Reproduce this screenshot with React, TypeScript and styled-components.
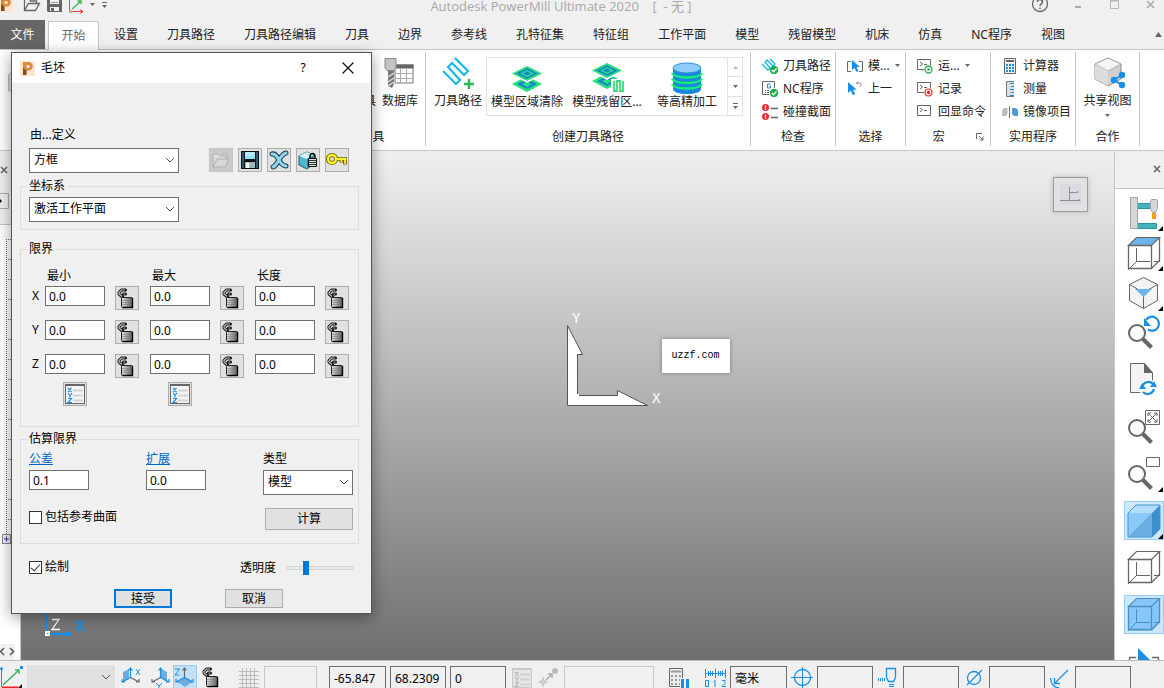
import React from "react";
import styled, { createGlobalStyle, css } from "styled-components";

const Global = createGlobalStyle`
  *, *::before, *::after { box-sizing: border-box; }
  html, body { margin: 0; height: 100%; }
  body, button, input, select {
    font-family: "Noto Sans", "Noto Sans CJK SC", sans-serif;
    font-size: 12px;
    line-height: 16px;
    color: #000;
  }
  button { padding: 0; margin: 0; border: 0; background: none; }
  svg { display: block; flex: none; }
`;

/* ---------- window frame ---------- */

const Window = styled.div`
  position: relative;
  display: flex;
  flex-direction: column;
  height: 100vh;
  overflow: hidden;
  background: #f0f0f0;
`;

const TitleBar = styled.header`
  flex: none;
  display: flex;
  height: 20px;
`;

const QuickAccess = styled.div`
  display: flex;
  gap: 6px;
  width: 110px;
`;

const Title = styled.h1`
  flex: 1;
  margin: 0;
  padding-right: 16px;
  font-family: "Open Sans", "Noto Sans CJK SC", sans-serif;
  font-size: 13px;
  font-weight: 400;
  line-height: 13px;
  text-align: center;
  white-space: pre;
  color: #a9a9a9;
`;

const WindowButtons = styled.div`
  display: flex;
  width: 136px;
`;

const FrameButton = styled.button<{ $w: number }>`
  width: ${(p) => p.$w}px;
  height: 16px;
`;

const Tabs = styled.nav`
  flex: none;
  display: flex;
  align-items: stretch;
  height: 30px;
  border-bottom: 1px solid #c6c6c6;
`;

const Tab = styled.button<{ $kind?: "file" | "active" }>`
  flex: none;
  padding: 0 14px;
  margin-right: 1px;
  white-space: nowrap;
  color: #222;
  ${(p) =>
    p.$kind === "file" &&
    css`
      width: 45px;
      padding: 0;
      margin-right: 3px;
      background: #666;
      color: #fff;
    `}
  ${(p) =>
    p.$kind === "active" &&
    css`
      width: 51px;
      padding: 0;
      margin: 1px 1px -1px 0;
      background: #fff;
      border: 1px solid #c6c6c6;
      border-bottom: 0;
      color: #666;
    `}
`;

const Collapse = styled.button`
  margin-left: auto;
  width: 10px;
`;

/* ---------- ribbon ---------- */

const Ribbon = styled.section`
  flex: none;
  display: flex;
  padding: 2px 0 4px;
  background: #fff;
  border-bottom: 1px solid #c6c6c6;
  color: #222;
`;

const Group = styled.div<{ $w: number }>`
  flex: none;
  display: flex;
  flex-direction: column;
  width: ${(p) => p.$w}px;
  border-right: 1px solid #c6c6c6;
`;

const GroupBody = styled.div<{ $align?: string }>`
  display: flex;
  justify-content: ${(p) => p.$align ?? "center"};
  height: 76px;
`;

const GroupLabel = styled.div`
  display: flex;
  justify-content: center;
  align-items: center;
  position: relative;
  padding: 1px 0;
`;

const Launcher = styled.button`
  position: absolute;
  right: 6px;
  top: 4px;
`;

const BigButton = styled.button<{ $w: number }>`
  display: flex;
  flex-direction: column;
  align-items: center;
  width: ${(p) => p.$w}px;
  padding-top: 5px;
  white-space: nowrap;
  color: #222;
`;

const SmallList = styled.div`
  flex: 1;
  padding: 2px 0 0 11px;
`;

const SmallButton = styled.button`
  display: flex;
  align-items: center;
  gap: 5px;
  height: 23px;
  white-space: nowrap;
  color: #222;
`;

const Gallery = styled.div`
  display: flex;
  height: 59px;
  margin: 5px 0 0 3px;
  border: 1px solid #e2e2e2;
  ${BigButton} { padding-top: 0; }
`;

const GalleryScroll = styled.div`
  display: flex;
  flex-direction: column;
  width: 15px;
  border-left: 1px solid #e2e2e2;
`;

const ScrollStep = styled.button`
  flex: 1;
  display: flex;
  align-items: center;
  justify-content: center;
  & + & { border-top: 1px solid #e2e2e2; }
`;

/* ---------- work area ---------- */

const Work = styled.main`
  flex: 1;
  display: flex;
  min-height: 0;
`;

const Explorer = styled.aside`
  flex: none;
  display: flex;
  flex-direction: column;
  width: 21px;
  overflow: hidden;
  background: #fff;
  border-right: 1px solid #c6c6c6;
`;

const ExplorerHead = styled.div`
  display: flex;
  flex-direction: column;
  gap: 17px;
  height: 74px;
  padding-top: 13px;
  background: #f0f0f0;
  border-bottom: 1px solid #c6c6c6;
`;

const ExplorerTree = styled.div`
  flex: 1;
  padding-top: 14px;
  min-height: 0;
  overflow: hidden;
`;

const ExplorerPager = styled.div`
  width: 15px;
  height: 16px;
  background: #f0f0f0;
`;

const Viewport = styled.section`
  position: relative;
  flex: 1;
  min-width: 0;
  overflow: hidden;
  background: linear-gradient(#f0f0f0, #6f6f6f);
`;

const Triad = styled.svg`
  position: absolute;
  left: 50%;
  top: 50%;
  margin: -96px 0 0 -2px;
`;

const MiniTriad = styled.svg`
  position: absolute;
  left: 20px;
  bottom: 18px;
`;

const Watermark = styled.div`
  position: absolute;
  left: 50%;
  top: 50%;
  margin: -67px 0 0 94px;
  padding: 9px 10px;
  background: #fff;
  box-shadow: 0 0 4px rgba(0, 0, 0, 0.35);
  font-family: "Liberation Mono", monospace;
  font-size: 10px;
`;

const ViewFace = styled.button`
  position: absolute;
  top: 26px;
  right: 26px;
  width: 35px;
  height: 35px;
  padding: 6px;
  border: 1px solid #9c9c9c;
  box-shadow: 0 0 5px rgba(0, 0, 0, 0.2);
  background: #e2e2e2;
`;

const ViewTools = styled.aside`
  flex: none;
  display: flex;
  flex-direction: column;
  width: 50px;
  overflow: hidden;
  background: #fff;
  border-left: 1px solid #c6c6c6;
`;

const ViewToolsHead = styled.div`
  flex: none;
  display: flex;
  justify-content: flex-end;
  height: 38px;
  padding: 13px 2px 0 0;
  background: #f0f0f0;
  border-bottom: 1px solid #c6c6c6;
`;

const ToolStack = styled.div<{ $gap: number; $top: number }>`
  display: flex;
  flex-direction: column;
  align-items: flex-end;
  gap: ${(p) => p.$gap}px;
  padding-top: ${(p) => p.$top}px;
`;

const Tool = styled.button<{ $on?: boolean }>`
  flex: none;
  width: 40px;
  height: 39px;
  border: 1px solid ${(p) => (p.$on ? "#99ccf5" : "transparent")};
  background: ${(p) => (p.$on ? "#cce6fb" : "transparent")};
  svg { margin: -1px; }
`;

/* ---------- status bar ---------- */

const StatusBar = styled.footer`
  flex: none;
  display: flex;
  gap: 12px;
  height: 28px;
  padding-top: 4px;
  overflow: hidden;
  border-top: 1px solid #bdbdbd;
  background: #f0f0f0;
`;

const StatusGroup = styled.div`
  display: flex;
  gap: 4px;
`;

const StatusIcon = styled.button<{ $w: number; $on?: boolean }>`
  flex: none;
  width: ${(p) => p.$w}px;
  height: 24px;
  border: 1px solid ${(p) => (p.$on ? "#99ccf5" : "transparent")};
  background: ${(p) => (p.$on ? "#c5e0f6" : "transparent")};
  svg { margin: -1px; }
`;

const StatusField = styled.input<{ $w: number }>`
  flex: none;
  width: ${(p) => p.$w}px;
  height: 24px;
  margin-top: 1px;
  padding: 0 4px;
  border: 1px solid #6f6f6f;
  border-radius: 0;
  background: #f0f0f0;
  outline: 0;
  &:disabled { border-color: #c8c8c8; }
`;

/* ---------- dialog ---------- */

const Dialog = styled.form`
  position: absolute;
  left: 11px;
  top: 52px;
  width: 361px;
  background: #f0f0f0;
  border: 1px solid #555;
  box-shadow: 0 3px 14px rgba(0, 0, 0, 0.4);
`;

const DialogTitle = styled.div`
  display: flex;
  align-items: center;
  height: 30px;
  padding-left: 8px;
  background: #fff;
`;

const DialogName = styled.h2`
  flex: 1;
  margin: 0 0 0 6px;
  font-size: 12px;
  font-weight: 400;
`;

const DialogBody = styled.div`
  padding: 44px 12px 5px 8px;
`;

const Indent = styled.div`
  padding-left: 10px;
`;

const FieldLabel = styled.label`
  display: block;
`;

const ToolLine = styled.div`
  display: flex;
  justify-content: space-between;
  padding: 5px 10px 5px 9px;
`;

const IconRow = styled.div`
  display: flex;
  gap: 5px;
`;

const IconButton = styled.button`
  flex: none;
  display: flex;
  align-items: center;
  justify-content: center;
  width: 24px;
  height: 24px;
  border: 1px solid #adadad;
  background: #e1e1e1;
  &:disabled { border-color: #c4c4c4; background: #cacaca; }
`;

const SelectBox = styled.span<{ $w: number; $flat?: boolean }>`
  display: block;
  position: relative;
  flex: none;
  width: ${(p) => p.$w}px;
  svg { position: absolute; right: 4px; top: 9px; pointer-events: none; }
  select {
    display: block;
    width: 100%;
    height: 25px;
    padding: 0 4px 1px;
    appearance: none;
    border: 1px solid ${(p) => (p.$flat ? "transparent" : "#6f6f6f")};
    border-radius: 0;
    background: ${(p) => (p.$flat ? "#e0e0e0" : "#fff")};
    outline: 0;
  }
`;

const Fieldset = styled.fieldset<{ $top: number; $pad: string }>`
  margin: ${(p) => p.$top}px 0 0;
  padding: ${(p) => p.$pad};
  min-width: 0;
  border: 1px solid #dcdcdc;
`;

const Legend = styled.legend`
  height: 16px;
  padding: 0 2px;
  margin-left: -2px;
`;

const LimitGrid = styled.div`
  display: grid;
  grid-template-columns: 13px 105px 105px 95px;
  row-gap: 10px;
  padding: 2px 0 0 3px;
`;

const LimitHeads = styled.div`
  display: grid;
  grid-template-columns: 105px 105px 95px;
  padding-left: 18px;
`;

const LimitCell = styled.div`
  display: flex;
  gap: 10px;
  align-items: flex-start;
`;

const AxisName = styled.span`
  line-height: 20px;
`;

const PickRow = styled.div`
  display: flex;
  gap: 81px;
  padding: 4px 0 0 34px;
`;

const TextInput = styled.input`
  display: block;
  width: 60px;
  height: 20px;
  padding: 0 3px;
  border: 1px solid #6f6f6f;
  border-radius: 0;
  background: #fff;
  outline: 0;
`;

const EstimateRow = styled.div`
  display: grid;
  grid-template-columns: 117px 117px 90px;
`;

const Stack = styled.div`
  display: flex;
  flex-direction: column;
  align-items: flex-start;
  gap: 3px;
`;

const HelpLink = styled.a`
  color: #0066cc;
  text-decoration: underline;
`;

const Between = styled.div<{ $pad: string }>`
  display: flex;
  justify-content: space-between;
  align-items: flex-start;
  padding: ${(p) => p.$pad};
`;

const CheckLabel = styled.label`
  display: flex;
  align-items: center;
  gap: 3px;
  height: 18px;
`;

const CheckBox = styled.input`
  appearance: none;
  display: flex;
  justify-content: center;
  width: 13px;
  height: 13px;
  margin: 0;
  border: 1px solid #333;
  background: #fff;
  &:checked::after {
    content: "";
    width: 5px;
    height: 9px;
    border: solid #333;
    border-width: 0 1px 1px 0;
    transform: rotate(42deg);
  }
`;

const PushButton = styled.button<{ $w: number; $h: number; $primary?: boolean }>`
  width: ${(p) => p.$w}px;
  height: ${(p) => p.$h}px;
  border: ${(p) => (p.$primary ? "2px solid #0078d7" : "1px solid #adadad")};
  background: #e1e1e1;
`;

const SliderLabel = styled.label`
  display: flex;
  align-items: center;
  gap: 11px;
  height: 20px;
`;

const Slider = styled.input`
  appearance: none;
  width: 66px;
  height: 14px;
  margin: 0;
  background: transparent;
  &::-webkit-slider-runnable-track {
    height: 4px;
    background: #e7eaea;
    border: 1px solid #d6d6d6;
  }
  &::-webkit-slider-thumb {
    appearance: none;
    width: 6px;
    height: 14px;
    margin-top: -6px;
    background: #0078d7;
  }
`;

const Actions = styled.div`
  display: flex;
  gap: 53px;
  padding: 11px 0 0 94px;
`;

/* ---------- icons ---------- */

const BLUE = "#1a8fe8";
const GREY = "#666";

type SvgProps = React.SVGProps<SVGSVGElement> & { w: number; h: number };
const Svg = ({ w, h, children, ...rest }: SvgProps) => (
  <svg width={w} height={h} viewBox={`0 0 ${w} ${h}`} fill="none" aria-hidden="true" {...rest}>
    {children}
  </svg>
);

const PShape = () => (
  <>
    <path d="M3 14V1h5.500a4.300 4.300 0 0 1 0 8.600H6.500V14z" fill="#d9893a" />
    <path d="M3 14V7l3.500 2.600V14z" fill="#8f4d16" />
    <path d="M6.500 4h2a1.500 1.500 0 0 1 0 3h-2z" fill="#fbe6d2" />
  </>
);

const Caret = ({ up, color = GREY }: { up?: boolean; color?: string }) => (
  <Svg w={5} h={3}><path d={up ? "M0 3h5L2.500 0z" : "M0 0h5L2.500 3z"} fill={color} /></Svg>
);

const MoreCaret = () => (
  <Svg w={5} h={6}><path d="M0 0h5v1H0zM0 3h5L2.500 6z" fill={GREY} /></Svg>
);

const Chevron = () => (
  <Svg w={10} h={7}><path d="M1 1l4 4 4-4" stroke="#555" /></Svg>
);

const CloseX = () => (
  <Svg w={10} h={10}><path d="M2 2l6 6M8 2L2 8" stroke="#666" strokeWidth="1.600" /></Svg>
);

const OpenLock = () => (
  <Svg w={22} h={22}>
    <defs>
      <linearGradient id="metal"><stop stopColor="#e4e4e4" /><stop offset="1" stopColor="#5a5a5a" /></linearGradient>
    </defs>
    <path d="M9.500 3H5.500L3 5.500V7L7 10.500M9.500 7H7.500" stroke="#111" strokeWidth="3" strokeLinejoin="round" strokeLinecap="round" />
    <path d="M9 3H5.500L3 5.500V7L6 9.500M9.300 7H7.500" stroke="#c4c4c4" strokeWidth="1.200" />
    <rect x="5.500" y="10.500" width="11" height="10" rx="1" fill="url(#metal)" stroke="#222" />
    <path d="M6 13.500h10M6 15.500h10M6 17.500h10" stroke="#777" strokeWidth=".5" />
    <path d="M16.500 11v9.500H6.500" stroke="#000" strokeWidth="1.400" />
  </Svg>
);

const XyzList = ({ off }: { off?: boolean }) => (
  <Svg w={22} h={22}>
    <rect x="1.500" y="1.500" width="19" height="19" fill={off ? "#e6e6e6" : "#f4f4f4"} stroke={off ? "#c8c8c8" : GREY} />
    <path d="M1 2h20" stroke={off ? "#c8c8c8" : GREY} strokeWidth="2" />
    <path d="M9 7.500h10M9 12.500h10M9 17.500h10" stroke={off ? "#d2d2d2" : "#d4d4d4"} strokeWidth="2" />
    <path d="M4 5l3.500 4M7.500 5L4 9M4 10l2 2.500 2-2.500M6 12v2.500M4 15.500h3.500L4 19.500h4" stroke={off ? "#bbb" : BLUE} strokeWidth="1.200" />
  </Svg>
);

const Hatch = () => (
  <Svg w={36} h={36}>
    <path d="M3 14l13 13 4-4L8 10l4-4 12 12 4-4L15 1" stroke="#18b8e8" strokeWidth="2.200" />
    <path d="M24 27h10M29 22v10" stroke="#2fb457" strokeWidth="2.500" />
  </Svg>
);

const Layers = ({ badge }: { badge?: boolean }) => (
  <Svg w={36} h={36}>
    <g transform={badge ? "translate(0 -1)" : "translate(0 2)"}>
      <path d="M3 24l15-8 15 8-15 8z" fill="#25e07b" />
      <path d="M8 24l10-5 10 5-10 5z" fill="#1787cc" />
      <path d="M13 24l5-2 5 2-5 3z" fill="#25e07b" />
      <path d="M1 13.500L18 5l17 8.500L18 23z" fill="#fff" />
      <path d="M3 13.500L18 6l15 7.500L18 21z" fill="#25e07b" />
      <path d="M7 13.500L18 8l11 5.500L18 19z" fill="#1787cc" />
      <path d="M11 13.500l7-3.500 7 3.500-7 3.500z" fill="#25e07b" />
      <path d="M14 13.500l4-2 4 2-4 2z" fill="#1787cc" />
    </g>
    {badge && (
      <>
        <path d="M22 21h14v14H22z" fill="#fff" />
        <path d="M25 23v10h3V23h3v10h3V23" stroke="#35dd7a" strokeWidth="1.800" />
      </>
    )}
  </Svg>
);

const Cylinder = () => (
  <Svg w={36} h={36}>
    <path d="M4 10v21c0 3 6 5 14 5s14-2 14-5V10z" fill="#1a86dc" />
    <path d="M3 15c3 6 27 6 30 0M3 20.500c3 6 27 6 30 0M3 26c3 6 27 6 30 0" stroke="#12ee78" strokeWidth="2.400" />
    <ellipse cx="18" cy="10" rx="14" ry="5" fill="#90ccfa" stroke="#2a8fe0" />
  </Svg>
);

const ToolDatabase = () => (
  <Svg w={36} h={36}>
    <path d="M13 8h18v18H13z" fill="#fff" stroke="#777" />
    <path d="M13 7.500h18.500v4H13z" fill="#666" />
    <path d="M18.500 12v14M24.500 12v14M13 16.500h18M13 21.500h18" stroke="#aaa" />
    <path d="M3 1.500h11v9l-2 3H5l-2-3z" fill="#c4c4c4" stroke="#888" />
    <path d="M6 14h6v13l-2 4-4-2z" fill="#777" />
    <path d="M6 20l6-4M6 25l6-4M6 29l6-4" stroke="#ddd" strokeWidth="1.500" />
  </Svg>
);

const ShareView = () => (
  <Svg w={36} h={36}>
    <path d="M5 7l13-6 13 6v15l-13 7-13-7z" fill="#d0d0d0" stroke="#888" />
    <path d="M5 7l13-6 13 6-13 7z" fill="#f4f4f4" stroke="#999" strokeWidth=".7" />
    <path d="M5 7.500l13 6.500v15L5 22z" fill="#dcdcdc" />
    <path d="M24 23l8-5M24 23l8 5" stroke={BLUE} strokeWidth="2" />
    <circle cx="24" cy="23" r="3.200" fill={BLUE} /><circle cx="32" cy="18" r="3.200" fill={BLUE} /><circle cx="32" cy="28" r="3.200" fill={BLUE} />
  </Svg>
);

const OkBadge = () => (
  <>
    <circle cx="12" cy="12" r="4.300" fill="#25ac50" />
    <path d="M9.800 12l1.700 1.700 3-3.200" stroke="#fff" strokeWidth="1.300" />
  </>
);

const PathCheck = () => (
  <Svg w={16} h={16}>
    <path d="M0 6l6 6 2-2-5-6 2-2 6 6 2-2-5-5" stroke="#18b8e8" strokeWidth="1.300" />
    <OkBadge />
  </Svg>
);
const NcCheck = () => (
  <Svg w={16} h={16}>
    <path d="M12.500 7V.500H.500v13H7" fill="#fff" stroke={GREY} />
    <path d="M8.500 3H5.500v4h3V5H7" stroke={BLUE} />
    <path d="M3 9.500h1M5 9.500h2M3 11.500h1M5 11.500h2" stroke={GREY} />
    <OkBadge />
  </Svg>
);
const Alerts = () => (
  <Svg w={16} h={16}>
    <circle cx="3.500" cy="3.500" r="3.500" fill="#ee2b2b" /><circle cx="3.500" cy="12.500" r="3.500" fill="#ee2b2b" />
    <path d="M3.500 1.500v3M3.500 5v1M3.500 10.500v3M3.500 14v1" stroke="#fff" strokeWidth="1.200" />
    <path d="M9 4.500h7M9 13.500h7" stroke={GREY} strokeWidth="1.500" />
  </Svg>
);

const pointer = "M0 0v10l2.500-2 2 4 2-1-2-4H8z";

const SelectModel = () => (
  <Svg w={16} h={16}>
    <path d="M4 3.500H.500v10H4M12 3.500h3.500v10H12" stroke={GREY} />
    <path d={pointer} fill={BLUE} transform="translate(5 2)" />
  </Svg>
);
const SelectPrev = () => (
  <Svg w={16} h={16}>
    <path d={pointer} fill={BLUE} transform="translate(1 1) scale(1.1)" />
    <path d="M9.500 2h3c2.500 0 2 3 0 3.500M11 .500L9.500 2 11 3.500" stroke="#888" />
  </Svg>
);
const Terminal = ({ badge }: { badge?: "run" | "rec" }) => (
  <Svg w={16} h={16}>
    <path d="M.500 1.500h13v10H.500z" fill="#fff" stroke={GREY} />
    <path d="M3 4l2.500 2L3 8M7 6.500h3" stroke={GREY} />
    {badge && <circle cx="11.500" cy="11.500" r="4.500" fill="#fff" />}
    {badge === "run" && <><circle cx="11.500" cy="11.500" r="3.500" stroke="#25ac50" strokeWidth="1.300" /><path d="M10.500 9.500v4l3-2z" fill="#25ac50" /></>}
    {badge === "rec" && <><circle cx="11.500" cy="11.500" r="3.500" stroke="#ee2b2b" strokeWidth="1.200" /><circle cx="11.500" cy="11.500" r="1.800" fill="#ee2b2b" /></>}
  </Svg>
);
const Calculator = () => (
  <Svg w={16} h={16}>
    <path d="M2.500.500h11v15h-11z" fill="#eee" stroke={GREY} />
    <path d="M4 3h8" stroke={GREY} strokeWidth="2" />
    <path d="M4 7h8M4 10h8M4 13h8" stroke={BLUE} strokeWidth="2" strokeDasharray="2 1" />
  </Svg>
);
const Measure = () => (
  <Svg w={16} h={16}>
    <path d="M4 0h8v16H4z" fill="#ddd" /><path d="M12 .500H4.500v15H12" stroke="#777" />
    <path d="M8 2.500h4M9 5.500h3M8 8.500h4M9 11.500h3M8 14.500h4" stroke={BLUE} />
  </Svg>
);
const Mirror = () => (
  <Svg w={16} h={16}>
    <path d="M0 6l2-2h3.500v6l-2 2H0z" fill="#bbb" /><path d="M10 4h4l2 2v6h-4l-2-2z" fill="#4f9bd2" />
    <path d="M7.500 2v12" stroke={BLUE} />
  </Svg>
);

/* The front square, the rear edges and the lid of a wire cube, shared by the view tools. */
const Wire = ({ stroke, fill, lid }: { stroke: string; fill?: string; lid?: string }) => (
  <>
    {fill && <path d="M4 12l8-8h24v24l-8 8H4z" fill={fill} />}
    <path d="M12.500 14v14M13 27.500h13M30 27.500h6M12 28l-8 8" stroke={stroke} />
    <path d="M4.500 11.500l8-8h23l-8 8z" fill={lid ?? "none"} stroke={stroke} strokeWidth="1.200" />
    <path d="M4.500 11.500h23v23h-23zM35.500 3.500v23l-8 8" stroke={stroke} strokeWidth="1.300" />
  </>
);

const Corner = () => <path d="M39 33v5h-5z" fill="#000" />;
const Lens = () => (
  <>
    <path d="M19 26l8.500 8.500" stroke={GREY} strokeWidth="4" />
    <circle cx="13" cy="20" r="8" fill="#fbfbfb" stroke={GREY} strokeWidth="2" />
  </>
);

const ToolSvg = ({ children }: { children: React.ReactNode }) => <Svg w={40} h={39}>{children}</Svg>;

const AxisFan = ({ mode }: { mode: "x" | "y" | "z" }) => (
  <Svg w={24} h={24}>
    {mode === "x" && <path d="M4 7l6-3v10l-6 3z" fill="#6cabdc" />}
    {mode === "y" && <path d="M12 4l6 3v10l-6-4z" fill="#6cabdc" />}
    {mode === "z" && <path d="M5 17l7-5 7 5-7 5z" fill="#6cabdc" />}
    <path d="M11.500 13V3M9.500 5.500l2-2.500 2 2.500" stroke={mode === "z" ? GREY : BLUE} strokeWidth="1.200" />
    <path d="M11.500 12.500L3 17M3 14v3h3" stroke={mode === "y" ? GREY : BLUE} strokeWidth="1.200" />
    <path d="M11.500 12.500L20 17M20 14v3h-3" stroke={mode === "x" ? GREY : BLUE} strokeWidth="1.200" />
    {mode === "x" && <path d="M17 4l4 6M21 4l-4 6" stroke={BLUE} />}
    {mode === "y" && <path d="M7 18l3 3 3-3M10 21v3" stroke={BLUE} />}
    {mode === "z" && <path d="M2 4h4.500L2 10h4.500" stroke={BLUE} />}
  </Svg>
);

/* ---------- data ---------- */

const tabs = ["设置", "刀具路径", "刀具路径编辑", "刀具", "边界", "参考线", "孔特征集", "特征组", "工作平面", "模型", "残留模型", "机床", "仿真", "NC程序", "视图"];

/* ---------- dialog ---------- */

const Drop = ({ id, w, value, flat }: { id: string; w: number; value: string; flat?: boolean }) => (
  <SelectBox $w={w} $flat={flat}>
    <select id={id} aria-label={id} defaultValue={value}>
      <option value={value}>{value}</option>
    </select>
    <Chevron />
  </SelectBox>
);

const BlockDialog = () => (
  <Dialog onSubmit={(e) => e.preventDefault()}>
    <DialogTitle>
      <Svg w={15} h={15}><rect width="15" height="15" fill="#fbe6d2" /><PShape /></Svg>
      <DialogName>毛坯</DialogName>
      <FrameButton type="button" $w={44} aria-label="help">?</FrameButton>
      <FrameButton type="button" $w={46} aria-label="close">
        <Svg w={46} h={16}><path d="M17.500 2.500l11 11M28.500 2.500l-11 11" stroke="#111" strokeWidth="1.200" /></Svg>
      </FrameButton>
    </DialogTitle>
    <DialogBody>
      <Indent><FieldLabel htmlFor="defined-by">由...定义</FieldLabel></Indent>
      <ToolLine>
        <Drop id="defined-by" w={150} value="方框" />
        <IconRow>
          <IconButton type="button" disabled aria-label="open">
            <Svg w={20} h={20}><path d="M2 17V4h5l2 2h6v4" fill="#dcdcdc" stroke="#b0b0b0" /><path d="M2 17l4-8h12l-4 8z" fill="#d6d6d6" stroke="#b0b0b0" /><path d="M11 4c4-2 6 0 6 4" stroke="#b0b0b0" /></Svg>
          </IconButton>
          <IconButton type="button" aria-label="save">
            <Svg w={20} h={20}><path d="M1 1h18v18H1z" fill="#111" /><path d="M5 2h10v7H5z" fill="#8fe0f5" /><path d="M5 3h10M5 5h10" stroke="#d9f5fb" /><path d="M5 12h10v6H5z" fill="#9cb6bf" /><path d="M6 13h3v5H6z" fill="#fff" /><path d="M3 2v16M17 2v16" stroke="#4aa9c6" /></Svg>
          </IconButton>
          <IconButton type="button" aria-label="delete">
            <Svg w={20} h={20}><path d="M3 4c4-1 5 3 7 6s3 6 7 6M17 3c-4 1-5 4-7 7s-3 6-6 7" stroke="#1b3d4e" strokeWidth="5" strokeLinecap="round" /><path d="M3 4c4-1 5 3 7 6s3 6 7 6M17 3c-4 1-5 4-7 7s-3 6-6 7" stroke="#8fd6f0" strokeWidth="3" strokeLinecap="round" /></Svg>
          </IconButton>
          <IconButton type="button" aria-label="lock block">
            <Svg w={20} h={20}><path d="M1 6l8-4 7 3v9l-7 5-8-4z" fill="#4fb6cc" stroke="#245a68" /><path d="M1 6l8-4 7 3-7 4z" fill="#d8f4fa" /><path d="M9 9v10l7-5V5z" fill="#2a8aa2" /><path d="M12 9V6.500c0-4 5-4 5 0V9" stroke="#111" strokeWidth="1.600" /><path d="M10.500 8.500h8v8h-8z" fill="#ddd" stroke="#111" /><path d="M11 10.500h7M11 12.500h7M11 14.500h7" stroke="#333" /></Svg>
          </IconButton>
          <IconButton type="button" aria-label="key">
            <Svg w={22} h={20}><circle cx="6" cy="9" r="4" stroke="#6b6400" strokeWidth="4.200" /><path d="M10 9h11M19 9v5.500M15.500 9v3.500" stroke="#6b6400" strokeWidth="3.600" /><circle cx="6" cy="9" r="4" stroke="#fff12c" strokeWidth="2.400" /><path d="M10 9h10.500M19 9v5M15.500 9v3" stroke="#fff12c" strokeWidth="1.800" /></Svg>
          </IconButton>
        </IconRow>
      </ToolLine>

      <Fieldset $top={0} $pad="3px 8px 7px">
        <Legend>坐标系</Legend>
        <Drop id="coordinate-system" w={150} value="激活工作平面" />
      </Fieldset>

      <Fieldset $top={11} $pad="11px 0 20px 8px">
        <Legend>限界</Legend>
        <LimitHeads><span>最小</span><span>最大</span><span>长度</span></LimitHeads>
        <LimitGrid>
          {["X", "Y", "Z"].map((axis) => (
            <React.Fragment key={axis}>
              <AxisName>{axis}</AxisName>
              {["最小", "最大", "长度"].map((col) => (
                <LimitCell key={col}>
                  <TextInput aria-label={`${axis} ${col}`} defaultValue="0.0" />
                  <IconButton type="button" aria-label={`lock ${axis} ${col}`}><OpenLock /></IconButton>
                </LimitCell>
              ))}
            </React.Fragment>
          ))}
        </LimitGrid>
        <PickRow>
          <IconButton type="button" aria-label="position min"><XyzList /></IconButton>
          <IconButton type="button" aria-label="position max"><XyzList /></IconButton>
        </PickRow>
      </Fieldset>

      <Fieldset $top={4} $pad="4px 5px 13px 8px">
        <Legend>估算限界</Legend>
        <EstimateRow>
          <Stack><HelpLink href="#tolerance">公差</HelpLink><TextInput aria-label="公差" defaultValue="0.1" /></Stack>
          <Stack><HelpLink href="#expansion">扩展</HelpLink><TextInput aria-label="扩展" defaultValue="0.0" /></Stack>
          <Stack><FieldLabel htmlFor="block-type">类型</FieldLabel><Drop id="block-type" w={90} value="模型" /></Stack>
        </EstimateRow>
        <Between $pad="13px 0 0">
          <CheckLabel><CheckBox type="checkbox" />包括参考曲面</CheckLabel>
          <PushButton type="button" $w={88} $h={22}>计算</PushButton>
        </Between>
      </Fieldset>

      <Between $pad="14px 6px 0 9px">
        <CheckLabel><CheckBox type="checkbox" defaultChecked />绘制</CheckLabel>
        <SliderLabel>透明度<Slider type="range" min={0} max={100} defaultValue={25} /></SliderLabel>
      </Between>
      <Actions>
        <PushButton type="submit" $w={58} $h={19} $primary>接受</PushButton>
        <PushButton type="button" $w={58} $h={19}>取消</PushButton>
      </Actions>
    </DialogBody>
  </Dialog>
);

/* ---------- page ---------- */

const RibbonBar = () => (
  <Ribbon>
    <Group $w={92}>
      <GroupBody $align="flex-start">
        <Svg w={60} h={40}><path d="M8.500 23l4-4h36v20h-40z" fill="#ddd" stroke="#bbb" /></Svg>
      </GroupBody>
    </Group>
    <Group $w={228} />
    <Group $w={106}>
      <GroupBody $align="flex-end">
        <BigButton $w={32}><Svg w={20} h={36}><path d="M6 4h8v14l-4 12-4-12z" fill="#aaa" /></Svg>刀具</BigButton>
        <BigButton $w={40}><ToolDatabase />数据库</BigButton>
        <Svg w={5} h={1} />
      </GroupBody>
      <GroupLabel>刀具</GroupLabel>
    </Group>
    <Group $w={325}>
      <GroupBody>
        <BigButton $w={50}><Hatch />刀具路径</BigButton>
        <Gallery>
          <BigButton $w={80}><Layers />模型区域清除</BigButton>
          <BigButton $w={80}><Layers badge />模型残留区...</BigButton>
          <BigButton $w={80}><Cylinder />等高精加工</BigButton>
          <GalleryScroll>
            <ScrollStep aria-label="previous"><Caret up color="#bbb" /></ScrollStep>
            <ScrollStep aria-label="next"><Caret /></ScrollStep>
            <ScrollStep aria-label="more"><MoreCaret /></ScrollStep>
          </GalleryScroll>
        </Gallery>
      </GroupBody>
      <GroupLabel>创建刀具路径</GroupLabel>
    </Group>
    <Group $w={85}>
      <GroupBody>
        <SmallList>
          <SmallButton><PathCheck />刀具路径</SmallButton>
          <SmallButton><NcCheck />NC程序</SmallButton>
          <SmallButton><Alerts />碰撞截面</SmallButton>
        </SmallList>
      </GroupBody>
      <GroupLabel>检查</GroupLabel>
    </Group>
    <Group $w={70}>
      <GroupBody>
        <SmallList>
          <SmallButton><SelectModel />模...<Caret /></SmallButton>
          <SmallButton><SelectPrev />上一</SmallButton>
        </SmallList>
      </GroupBody>
      <GroupLabel>选择</GroupLabel>
    </Group>
    <Group $w={85}>
      <GroupBody>
        <SmallList>
          <SmallButton><Terminal badge="run" />运...<Caret /></SmallButton>
          <SmallButton><Terminal badge="rec" />记录</SmallButton>
          <SmallButton><Terminal />回显命令</SmallButton>
        </SmallList>
      </GroupBody>
      <GroupLabel>
        宏&nbsp;&nbsp;&nbsp;&nbsp;&nbsp;&nbsp;
        <Launcher aria-label="macro options">
          <Svg w={9} h={9}><path d="M1.500 7V1.500H7M4 4l4 4M8 4.500V8H4.500" stroke={GREY} /></Svg>
        </Launcher>
      </GroupLabel>
    </Group>
    <Group $w={85}>
      <GroupBody>
        <SmallList>
          <SmallButton><Calculator />计算器</SmallButton>
          <SmallButton><Measure />测量</SmallButton>
          <SmallButton><Mirror />镜像项目</SmallButton>
        </SmallList>
      </GroupBody>
      <GroupLabel>实用程序</GroupLabel>
    </Group>
    <Group $w={64}>
      <GroupBody>
        <BigButton $w={60}><ShareView />共享视图<Svg w={5} h={9}><path d="M0 5h5L2.500 8z" fill={GREY} /></Svg></BigButton>
      </GroupBody>
      <GroupLabel>合作</GroupLabel>
    </Group>
  </Ribbon>
);

const ExplorerPanel = () => (
  <Explorer>
    <ExplorerHead>
      <Svg w={10} h={12}><path d="M1 3l6 6M7 3L1 9" stroke={GREY} strokeWidth="1.600" /></Svg>
      <Svg w={10} h={16}><path d="M-1 .500H8.500v15H-1" fill="#eee" stroke="#aaa" /><path d="M0 6l2 2-2 2z" fill="#000" /></Svg>
    </ExplorerHead>
    <ExplorerTree>
      <Svg w={20} h={308}>
        <path d="M6.500 0v295" stroke="#666" strokeDasharray="1 1" />
        {Array.from({ length: 15 }, (_, i) => (
          <path key={i} d={`M6 ${i * 20 + 0.5}h14`} stroke="#666" strokeDasharray="1 1" />
        ))}
        <rect x="2.500" y="295.500" width="8" height="9" fill="#eee" stroke="#888" />
        <path d="M4 300h5M6.500 297.500v5" stroke="#24449c" />
      </Svg>
    </ExplorerTree>
    <ExplorerPager>
      <Svg w={15} h={15}><path d="M4 4L.500 7.500 4 11M10 4l3.500 3.500L10 11" stroke="#555" strokeWidth="1.500" /></Svg>
    </ExplorerPager>
  </Explorer>
);

const Scene = () => (
  <Viewport>
    <ViewFace aria-label="top view">
      <Svg w={21} h={21}>
        <rect width="21" height="21" fill="#d8dbe2" />
        <path d="M9.500 3v13M9.500 8.500h8M0 16.500h20M17 7l1.500 1.500M19 15l1 1.500" stroke="#8e8e92" />
      </Svg>
    </ViewFace>
    <Triad width="100" height="100" viewBox="0 0 100 100" fill="none">
      <path d="M1.500 15.500l15 29h-5v41h40v-5l30 15h-80z" fill="#fff" stroke="#555" />
      <rect x="10" y="84" width="3" height="3" fill="#fff" />
      <text x="6" y="13" fill="#fff" fontFamily="DejaVu Sans Mono, monospace" fontSize="14">Y</text>
      <text x="86" y="93" fill="#fff" fontFamily="DejaVu Sans Mono, monospace" fontSize="14">X</text>
    </Triad>
    <Watermark>uzzf.com</Watermark>
    <MiniTriad width="50" height="50" viewBox="0 0 50 50" fill="none">
      <path d="M6 10v33M6 42h25" stroke="#0a94fa" strokeWidth="2" />
      <ellipse cx="26" cy="42" rx="3" ry="2" fill="#0a94fa" />
      <rect x="4" y="39" width="5" height="5" fill="#fff" />
      <path d="M6 41h1v1H6z" fill="#0a94fa" />
      <path d="M11 27.500h7l-7 10h8" stroke="#fff" strokeWidth="1.300" />
      <path d="M35 28l8 11M43 28l-8 11" stroke="#0a94fa" strokeWidth="1.800" />
    </MiniTriad>
  </Viewport>
);

const ViewToolbar = () => (
  <ViewTools>
    <ViewToolsHead><CloseX /></ViewToolsHead>
    <ToolStack $gap={1} $top={4}>
      <Tool aria-label="machine"><ToolSvg>
        <path d="M13.500 10.500h13v5h-13zM13.500 30.500h19v5h-19z" fill="#45b3bd" stroke="#2b959f" />
        <path d="M6.500 4.500h7v31h-7z" fill="#d6d6d6" stroke="#a5a5a5" />
        <path d="M26.500 7.500l1-1h5l1 1v8l-2 4h-3l-2-4z" fill="#d6d6d6" stroke="#a5a5a5" />
        <path d="M28 20h4v6h-4z" fill="#f5a200" /><Corner />
      </ToolSvg></Tool>
      <Tool aria-label="view top"><ToolSvg><g transform="translate(0 1)"><Wire stroke={GREY} lid="#6db2e8" /></g><Corner /></ToolSvg></Tool>
      <Tool aria-label="view isometric"><ToolSvg>
        <path d="M19.500 4.500l14 7v16l-14 8-14-8v-16z" fill="#f3f3f3" stroke={GREY} />
        <path d="M5.500 11.500l14 8 14-8M19.500 19.500v16" stroke={GREY} />
        <path d="M11 16h17l-8.500 8z" fill="#6db2e8" /><Corner />
      </ToolSvg></Tool>
      <Tool aria-label="zoom previous"><ToolSvg>
        <Lens />
        <path d="M22 7a7 7 0 1 1 2 9.500" stroke={BLUE} strokeWidth="2.200" /><path d="M20 5v8h7z" fill={BLUE} />
      </ToolSvg></Tool>
    </ToolStack>
    <ToolStack $gap={8} $top={8}>
      <Tool aria-label="refresh"><ToolSvg>
        <path d="M6.500 3.500h14l8 9v20h-22z" fill="#f3f3f3" stroke={GREY} /><path d="M20 3v10h9z" fill={GREY} />
        <circle cx="24" cy="28" r="9" fill="#fff" />
        <path d="M18 27a6.500 6.500 0 0 1 11-3M30 29a6.500 6.500 0 0 1-11 3" stroke={BLUE} strokeWidth="2.200" />
        <path d="M26 27h7l-3-6zM15 29h7l-4-6z" fill={BLUE} />
      </ToolSvg></Tool>
      <Tool aria-label="zoom to fit"><ToolSvg>
        <g transform="translate(0 1)"><Lens /></g>
        <path d="M21.500 3.500h14v14h-14z" fill="#fff" stroke={GREY} />
        <path d="M24 6l9 9M33 6l-9 9M24 9V6h3M30 6h3v3M33 12v3h-3M27 15h-3v-3" stroke={GREY} />
      </ToolSvg></Tool>
      <Tool aria-label="zoom box"><ToolSvg>
        <Lens />
        <path d="M22.500 3.500h13v9h-13z" fill="#fff" stroke={GREY} /><Corner />
      </ToolSvg></Tool>
      <Tool $on aria-label="shaded"><ToolSvg>
        <path d="M4 12h24v24H4z" fill="#8bc9f8" /><path d="M4 36l24-24v24z" fill="#6aaee4" />
        <path d="M4 12l8-8h24l-8 8z" fill="#b3dcfc" /><path d="M28 12l8-8v24l-8 8z" fill="#3d8fcb" />
        <path d="M4 12l8-8h24v24l-8 8H4z" stroke="#4796d1" /><Corner />
      </ToolSvg></Tool>
      <Tool aria-label="wireframe"><ToolSvg><Wire stroke={GREY} /></ToolSvg></Tool>
      <Tool $on aria-label="translucent"><ToolSvg><Wire stroke="#4c90c2" fill="#87c6f8" /></ToolSvg></Tool>
      <Tool aria-label="select"><ToolSvg>
        <path d="M5.500 24V15.500H12M28 15.500h6.500V24" stroke={GREY} strokeWidth="1.300" />
        <path d="M14 6v26l20-6z" fill={BLUE} />
      </ToolSvg></Tool>
    </ToolStack>
  </ViewTools>
);

const Status = () => (
  <StatusBar>
    <StatusGroup>
      <StatusIcon $w={23} aria-label="workplane">
        <Svg w={23} h={24}><path d="M1.500 22V2M0 5l1.500-3L3 5" stroke={BLUE} /><path d="M3 20L19 5M15 5h4v4" stroke="#2fb457" strokeWidth="1.300" /><path d="M2 22.500h16" stroke="#e22" strokeWidth="2" /><path d="M20 1h3v3h-3z" fill={BLUE} /><path d="M22 19v5h-5z" fill="#000" /></Svg>
      </StatusIcon>
      <SelectBox $w={88} $flat>
        <select aria-label="active workplane" defaultValue=""><option value=""></option></select>
        <Chevron />
      </SelectBox>
      <StatusIcon $w={26} aria-label="plane yz"><AxisFan mode="x" /></StatusIcon>
      <StatusIcon $w={20} aria-label="plane zx"><AxisFan mode="y" /></StatusIcon>
      <StatusIcon $w={24} $on aria-label="plane xy"><AxisFan mode="z" /></StatusIcon>
      <StatusIcon $w={24} aria-label="lock plane"><OpenLock /></StatusIcon>
    </StatusGroup>
    <StatusGroup>
      <StatusIcon $w={23} aria-label="grid">
        <Svg w={23} h={24}><path d="M5.500 3v21M9.500 3v21M13.500 3v21M17.500 3v21M2 6.500h20M2 10.500h20M2 14.500h20M2 18.500h20M2 22.500h20" stroke="#bbb" /></Svg>
      </StatusIcon>
      <StatusField $w={53} disabled aria-label="grid size" />
    </StatusGroup>
    <StatusGroup>
      <StatusField $w={57} aria-label="x" defaultValue="-65.847" />
      <StatusField $w={56} aria-label="y" defaultValue="68.2309" />
      <StatusField $w={56} aria-label="z" defaultValue="0" />
      <StatusIcon $w={24} aria-label="position"><Svg w={24} h={24}><g transform="translate(1 2)"><XyzList off /></g></Svg></StatusIcon>
      <StatusIcon $w={22} aria-label="snap">
        <Svg w={22} h={24}><circle cx="17" cy="6" r="3" fill="#bbb" /><path d="M8 15l6-6M10 9h4v4" stroke="#aaa" strokeWidth="1.500" /><path d="M5 14l3 3-3 3-3-3zM5 12v10M0 17h10" stroke="#bbb" /></Svg>
      </StatusIcon>
      <StatusField $w={90} disabled aria-label="message" />
    </StatusGroup>
    <StatusGroup>
      <StatusIcon $w={24} aria-label="calculator">
        <Svg w={24} h={24}><path d="M3.500 3.500h13v18h-13z" fill="#eee" stroke={GREY} /><path d="M5 6.500h10" stroke="#999" strokeWidth="2" /><path d="M5 11h10M5 15h10M5 19h10" stroke="#999" strokeWidth="2" strokeDasharray="2 2" /><path d="M14 13h10v11H14z" fill="#f0f0f0" /><path d="M15 14h3v10h-3zM20 14h3v10h-3z" fill={BLUE} /></Svg>
      </StatusIcon>
    </StatusGroup>
    <StatusGroup>
      <StatusIcon $w={24} aria-label="units">
        <Svg w={24} h={24}><path d="M3.500 4v9M23.500 4v9M13.500 4v9M3 8.500h20M6.500 6v5M8.500 6v5M10.500 6v5M16.500 6v5M18.500 6v5M20.500 6v5" stroke={BLUE} /><path d="M3.500 15.500h3v6h-3zM11.500 17l1.500-1.500v6.500M20 15.500h3v3l-3 3h4" stroke={BLUE} /></Svg>
      </StatusIcon>
      <StatusField $w={57} aria-label="units" defaultValue="毫米" />
      <StatusIcon $w={22} aria-label="tolerance">
        <Svg w={22} h={24}><circle cx="11.500" cy="12.500" r="8" stroke={BLUE} strokeWidth="1.300" /><path d="M11.500 2v21M0 12.500h22" stroke={BLUE} /></Svg>
      </StatusIcon>
      <StatusField $w={56} aria-label="tolerance value" />
      <StatusIcon $w={22} aria-label="thickness">
        <Svg w={22} h={24}><path d="M9.500 3.500h9v9l-2 4h-5l-2-4z" stroke={BLUE} strokeWidth="1.300" /><path d="M1.500 13v3M3.500 13v3M5.500 13v3M7.500 13v3M12 19.500h5M12 21.500h5M12 23.500h5" stroke={BLUE} /></Svg>
      </StatusIcon>
      <StatusField $w={56} aria-label="thickness value" />
      <StatusIcon $w={22} aria-label="diameter">
        <Svg w={22} h={24}><circle cx="11" cy="13" r="6.500" stroke={BLUE} strokeWidth="1.300" /><path d="M4 20L19 5" stroke={BLUE} strokeWidth="1.300" /></Svg>
      </StatusIcon>
      <StatusField $w={56} aria-label="diameter value" />
      <StatusIcon $w={22} aria-label="radius">
        <Svg w={22} h={24}><path d="M19 5L6 18M5.500 13v5.500H11M1.500 13c0 6 4 10 9 10" stroke={BLUE} strokeWidth="1.300" /></Svg>
      </StatusIcon>
      <StatusField $w={56} aria-label="radius value" />
    </StatusGroup>
  </StatusBar>
);

export default function App() {
  return (
    <>
      <Global />
      <Window>
        <TitleBar>
          <QuickAccess>
            <Svg w={13} h={14}><rect width="13" height="12" fill="#fbe6d2" /><g transform="translate(-2 -3)"><PShape /></g></Svg>
            <Svg w={22} h={14}><path d="M5.500 10.500V-1h5l1 2h6v2M5.500 10.500l4-7h11l-4 7z" stroke={GREY} strokeWidth="1.300" /></Svg>
            <Svg w={16} h={14}><path d="M0-2h15v14H1l-1-1z" fill={GREY} /><path d="M3-2h9v6H3z" fill="#f0f0f0" /><path d="M3 7h9v4H3z" fill="#f0f0f0" /><path d="M4 8h3v3H4z" fill={GREY} /><path d="M4 2.500h7" stroke="#999" /></Svg>
            <Svg w={40} h={14}><path d="M.500 10V0" stroke={BLUE} /><path d="M3 9L12 1M8.500 1H12v3" stroke="#2fb457" strokeWidth="1.300" /><path d="M3 11.500h11M11 9.500l3 2-3 2" stroke="#e33" /><path d="M.500 10.500h2v2h-2z" stroke="#999" /><path d="M21 3h5l-2.500 3zM33 2h5v1h-5zM33 5h5l-2.500 3z" fill={GREY} /></Svg>
          </QuickAccess>
          <Title>{"Autodesk PowerMill Ultimate 2020    [  - 无 ]"}</Title>
          <WindowButtons>
            <FrameButton $w={32} aria-label="help">
              <Svg w={26} h={16}><circle cx="12" cy="4" r="7.500" stroke={GREY} strokeWidth="1.300" /><path d="M9.500 2c0-3.500 5-3.500 5 0 0 2-2.500 2-2.500 4M12 7.500V9" stroke={GREY} strokeWidth="1.600" /></Svg>
            </FrameButton>
            <FrameButton $w={36} aria-label="minimize"><Svg w={30} h={16}><path d="M15 7h6" stroke="#aaa" strokeWidth="2" /></Svg></FrameButton>
            <FrameButton $w={36} aria-label="maximize"><Svg w={30} h={16}><path d="M14.500.500h8v8h-8zM14 1h9" stroke="#b5b5b5" /></Svg></FrameButton>
            <FrameButton $w={32} aria-label="close window"><Svg w={30} h={16}><path d="M15 1l7 7M22 1l-7 7" stroke="#aaa" strokeWidth="1.600" /></Svg></FrameButton>
          </WindowButtons>
        </TitleBar>
        <Tabs>
          <Tab $kind="file">文件</Tab>
          <Tab $kind="active">开始</Tab>
          {tabs.map((t) => <Tab key={t}>{t}</Tab>)}
          <Collapse aria-label="collapse ribbon"><Svg w={9} h={6}><path d="M1 5h7L4.500 0z" fill={GREY} /></Svg></Collapse>
        </Tabs>
        <RibbonBar />
        <Work>
          <ExplorerPanel />
          <Scene />
          <ViewToolbar />
        </Work>
        <Status />
        <BlockDialog />
      </Window>
    </>
  );
}
